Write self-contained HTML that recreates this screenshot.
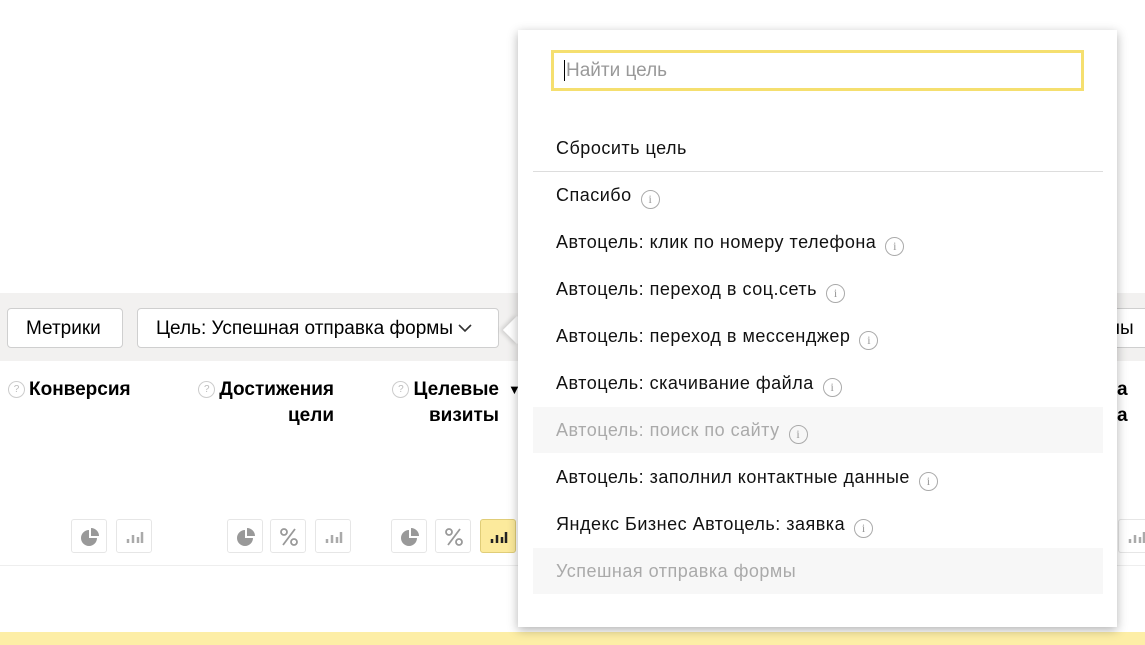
<!DOCTYPE html>
<html><head><meta charset="utf-8"><style>
body{margin:0;width:1145px;height:645px;position:relative;overflow:hidden;background:#fff;font-family:"Liberation Sans","Noto Sans CJK SC",sans-serif;color:#000}
.abs{position:absolute}
.band{left:0;top:293px;width:1145px;height:68px;background:#f2f1f0}
.btn{border:1px solid #cfcfcf;border-radius:4px;background:#fff;font-size:19px;line-height:40px;height:40px;box-sizing:border-box;padding:0 18px;white-space:nowrap}
.hd{font-weight:bold;font-size:19px;line-height:26px;text-align:right}
.q{display:inline-block;width:15px;height:15px;border:1px solid #ccc;border-radius:50%;font-size:10px;line-height:15px;text-align:center;color:#bbb;font-weight:normal;vertical-align:3px;margin-right:4px}
.ib{width:36px;height:34px;border:1px solid #e6e6e6;border-radius:3px;box-sizing:border-box;background:#fff}
.ib svg{position:absolute;left:8px;top:7px}
.pop{left:518px;top:30px;width:599px;height:597px;background:#fff;box-shadow:0 3px 10px rgba(0,0,0,.3)}
.it{position:absolute;left:38px;font-size:18px;letter-spacing:.5px;line-height:24px;color:#111;white-space:nowrap}
.i{display:inline-block;width:19px;height:19px;border:1.5px solid #aaa;border-radius:50%;box-sizing:border-box;font-size:12px;line-height:16px;text-align:center;color:#999;margin-left:9px;vertical-align:-2px;font-family:"Liberation Serif",serif;letter-spacing:0}
.gr{position:absolute;left:15px;width:570px;height:46px;background:#f7f7f7}
</style></head><body>
<div class="abs band"></div>
<div class="abs btn" style="left:7px;top:308px;width:116px;">Метрики</div>
<div class="abs btn" style="left:137px;top:308px;width:362px;">Цель: Успешная отправка формы <svg width="14" height="10" style="vertical-align:1px"><path d="M1 2l6 6 6-6" fill="none" stroke="#333" stroke-width="1.6"/></svg></div>
<div class="abs btn" style="left:1090px;top:308px;width:80px;padding-left:8px">нны</div>
<div class="abs hd" style="left:8px;top:377px"><span class="q">?</span>Конверсия</div>
<div class="abs hd" style="left:180px;top:377px;width:154px"><span class="q">?</span>Достижения<br>цели</div>
<div class="abs hd" style="left:378px;top:377px;width:121px"><span class="q">?</span>Целевые<br>визиты</div>
<div class="abs" style="left:508px;top:382px;font-size:13px">▼</div>
<div class="abs hd" style="left:1117px;top:377px;width:22px;text-align:left">а<br>а</div>
<div class="abs" style="left:0;top:565px;width:1145px;height:1px;background:#eee"></div>
<div class="abs" style="left:0;top:632px;width:1145px;height:13px;background:#fdeea6"></div>
<div class="abs ib" style="left:71px;top:519px"><svg width="20" height="20"><path d="M9 3a8 8 0 1 0 8 8H9z" fill="#999"/><path d="M11 1a8 8 0 0 1 8 8h-8z" fill="#999"/></svg></div>
<div class="abs ib" style="left:116px;top:519px"><svg width="20" height="20"><path d="M3 16v-4M8 16V8M13 16v-6M17 16V5" stroke="#aaa" stroke-width="2.5"/></svg></div>
<div class="abs ib" style="left:227px;top:519px"><svg width="20" height="20"><path d="M9 3a8 8 0 1 0 8 8H9z" fill="#999"/><path d="M11 1a8 8 0 0 1 8 8h-8z" fill="#999"/></svg></div>
<div class="abs ib" style="left:270px;top:519px"><svg width="20" height="20"><circle cx="5" cy="5" r="3" fill="none" stroke="#999" stroke-width="1.8"/><circle cx="15" cy="15" r="3" fill="none" stroke="#999" stroke-width="1.8"/><path d="M16 2L4 18" stroke="#999" stroke-width="1.8"/></svg></div>
<div class="abs ib" style="left:315px;top:519px"><svg width="20" height="20"><path d="M3 16v-4M8 16V8M13 16v-6M17 16V5" stroke="#aaa" stroke-width="2.5"/></svg></div>
<div class="abs ib" style="left:391px;top:519px"><svg width="20" height="20"><path d="M9 3a8 8 0 1 0 8 8H9z" fill="#999"/><path d="M11 1a8 8 0 0 1 8 8h-8z" fill="#999"/></svg></div>
<div class="abs ib" style="left:435px;top:519px"><svg width="20" height="20"><circle cx="5" cy="5" r="3" fill="none" stroke="#999" stroke-width="1.8"/><circle cx="15" cy="15" r="3" fill="none" stroke="#999" stroke-width="1.8"/><path d="M16 2L4 18" stroke="#999" stroke-width="1.8"/></svg></div>
<div class="abs ib" style="left:480px;top:519px;background:#fcea9c;border-color:#e0cd78"><svg width="20" height="20"><path d="M3 16v-4M8 16V8M13 16v-6M17 16V5" stroke="#222" stroke-width="2.5"/></svg></div>
<div class="abs ib" style="left:1118px;top:519px"><svg width="20" height="20"><path d="M3 16v-4M8 16V8M13 16v-6M17 16V5" stroke="#aaa" stroke-width="2.5"/></svg></div>
<div class="abs" style="left:507px;top:320px;width:20px;height:20px;background:#fff;transform:rotate(45deg);box-shadow:-2px 2px 4px rgba(0,0,0,.15)"></div>
<div class="abs pop">
 <div style="position:absolute;left:33px;top:20px;width:533px;height:41px;border:3px solid #f5df6f;box-sizing:border-box;font-size:19px;line-height:35px;padding-left:10px;color:#999"><span style="border-left:1px solid #000;padding-left:1px">Найти цель</span></div>
 <div class="it" style="top:106px">Сбросить цель</div>
 <div style="position:absolute;left:15px;top:141px;width:570px;height:1px;background:#ddd"></div>
 <div class="it" style="top:153px">Спасибо<span class="i">i</span></div>
 <div class="it" style="top:200px">Автоцель: клик по номеру телефона<span class="i">i</span></div>
 <div class="it" style="top:247px">Автоцель: переход в соц.сеть<span class="i">i</span></div>
 <div class="it" style="top:294px">Автоцель: переход в мессенджер<span class="i">i</span></div>
 <div class="it" style="top:341px">Автоцель: скачивание файла<span class="i">i</span></div>
 <div class="gr" style="top:377px"></div>
 <div class="it" style="top:388px;color:#aaa">Автоцель: поиск по сайту<span class="i">i</span></div>
 <div class="it" style="top:435px">Автоцель: заполнил контактные данные<span class="i">i</span></div>
 <div class="it" style="top:482px">Яндекс Бизнес Автоцель: заявка<span class="i">i</span></div>
 <div class="gr" style="top:518px"></div>
 <div class="it" style="top:529px;color:#aaa">Успешная отправка формы</div>
</div>
</body></html>
